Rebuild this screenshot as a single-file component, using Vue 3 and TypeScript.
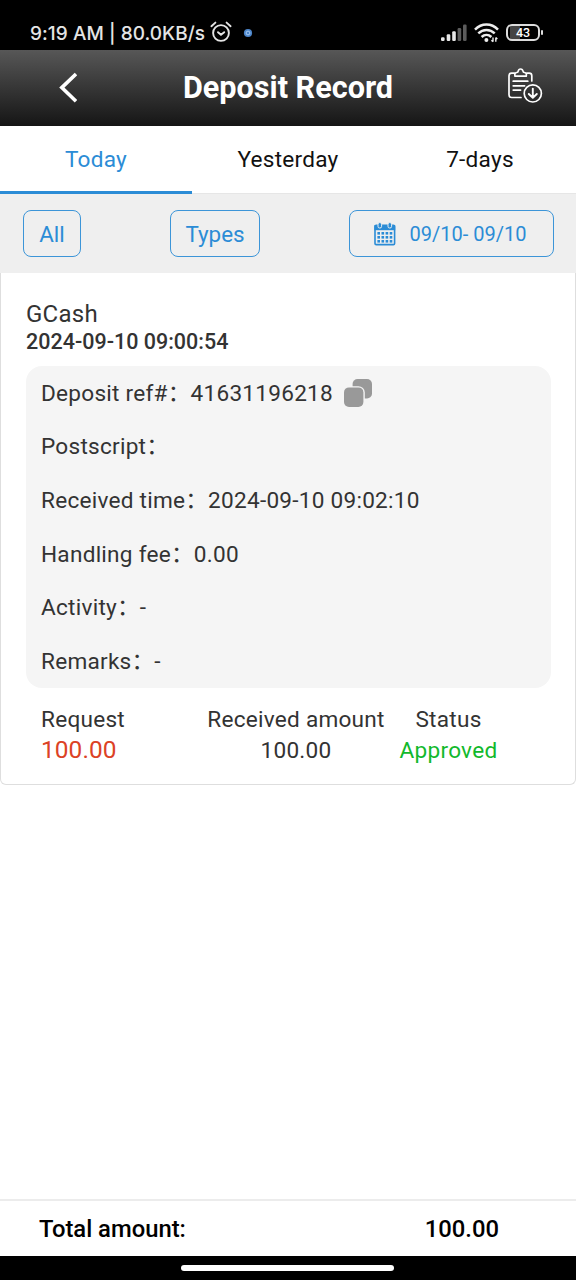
<script setup lang="ts">
import { ref } from 'vue'

interface Detail {
  label: string
  value: string
  copy?: boolean
}

const tabs: string[] = ['Today', 'Yesterday', '7-days']
const active = ref<number>(0)

const details: Detail[] = [
  { label: 'Deposit ref#', value: '41631196218', copy: true },
  { label: 'Postscript', value: '' },
  { label: 'Received time', value: '2024-09-10 09:02:10' },
  { label: 'Handling fee', value: '0.00' },
  { label: 'Activity', value: '-' },
  { label: 'Remarks', value: '-' },
]

const calendarRows: number[] = [0, 1, 2]
const calendarCols: number[] = [0, 1, 2, 3]
</script>

<template>
  <div class="screen">
    <div class="status">
      <span class="clock">9:19 AM | 80.0KB/s</span>
      <svg class="alarm" width="22" height="22" viewBox="0 0 22 22" fill="none" stroke="#e4e4e4" stroke-width="1.9" stroke-linecap="round">
        <circle cx="11" cy="12" r="7.9" />
        <path d="M1.4 5.2 5.4 1.6M20.6 5.2 16.6 1.6M8 11.2l3 2.6 3.2-2.6" />
      </svg>
      <svg class="dot" width="10" height="10" viewBox="0 0 10 10">
        <circle cx="5" cy="5" r="4.1" fill="#4d86cb" />
        <circle cx="5" cy="5" r="1.9" fill="none" stroke="#a9cdf2" stroke-width="1" />
      </svg>
      <span class="grow"></span>
      <svg class="signal" width="26" height="18" viewBox="0 0 26 18">
        <g fill="#e8e8e8">
          <rect x="0" y="13.2" width="3.6" height="3.8" rx="1.2" />
          <rect x="5.7" y="10.2" width="3.6" height="6.8" rx="1.2" />
          <rect x="11.2" y="7.2" width="3.6" height="9.8" rx="1.2" />
        </g>
        <g fill="#5c5c5c">
          <rect x="16.6" y="4" width="3.6" height="13" rx="1.2" />
          <rect x="22" y="0.6" width="3.6" height="16.4" rx="1.2" />
        </g>
      </svg>
      <svg class="wifi" width="25" height="20" viewBox="0 0 25 20" fill="none" stroke="#ececec" stroke-width="2.5">
        <path d="M1 6.6C7.6-.2 17.4-.2 24 6.6" />
        <path d="M4.3 10.4c4.7-4.6 11.7-4.6 16.4 0" />
        <path d="M7.6 14c2.9-2.7 6.9-2.7 9.8 0" />
        <circle cx="12.4" cy="17" r="2" fill="#ececec" stroke="none" />
        <path d="M19 14.4v4.4M17.4 17.2l1.6 1.4M21.8 18.8v-4.4M23.4 16l-1.6-1.4" stroke-width="1.4" />
      </svg>
      <div class="battery"><span>43</span></div>
    </div>

    <header class="header">
      <svg class="back" width="20" height="32" viewBox="0 0 20 32" fill="none" stroke="#fff" stroke-width="3.6">
        <path d="M19 2 4.8 15.6 19 29.2" />
      </svg>
      <h1>Deposit Record</h1>
      <svg class="report" width="36" height="36" viewBox="0 0 36 36" fill="none" stroke="#fff" stroke-width="1.7" stroke-linecap="round" stroke-linejoin="round">
        <path d="M7.5 5.2H4.6Q2 5.2 2 7.8v19Q2 29.5 4.6 29.5H14M19.8 5.2h2.4q2.6 0 2.6 2.6V13" />
        <path d="M8 8.2q-.9-3.3 1.8-3.7 1.2-.1 1.4-1.3Q11.6 1 13.6 1t2.4 2.2q.2 1.2 1.4 1.3 2.7.4 1.8 3.7Z" />
        <path d="M6.2 13.2h14.6M6.2 17.8h11.4M6.2 22.1h7.4" />
        <circle cx="25.8" cy="25.4" r="8.6" />
        <path d="M25.8 20.6v9M21.8 26l4 3.8 4-3.8" stroke-width="1.9" />
      </svg>
    </header>

    <nav class="tabs">
      <button
        v-for="(tab, i) in tabs"
        :key="tab"
        class="tab"
        :class="{ active: active === i }"
        @click="active = i"
      >{{ tab }}</button>
    </nav>

    <div class="filters">
      <button class="filter all">All</button>
      <button class="filter types">Types</button>
      <button class="filter range">
        <svg width="22" height="24" viewBox="0 0 22 24">
          <rect x="1" y="3.4" width="19.6" height="19.2" rx="1.2" fill="none" stroke="#2b8cd6" stroke-width="1.6" />
          <path d="M.4 3.2h20.8v5H.4Z" fill="#2b8cd6" />
          <g fill="#2b8cd6" stroke="#efefef" stroke-width="1">
            <rect x="4" y=".6" width="3.6" height="5.4" rx="1.6" />
            <rect x="14" y=".6" width="3.6" height="5.4" rx="1.6" />
          </g>
          <template v-for="r in calendarRows" :key="r">
            <rect
              v-for="c in calendarCols"
              :key="c"
              :x="3.4 + c * 4.1"
              :y="10 + r * 4"
              width="2.6"
              height="2.6"
              fill="#2b8cd6"
            />
          </template>
        </svg>
        <span>09/10- 09/10</span>
      </button>
    </div>

    <main class="card">
      <div class="method">GCash</div>
      <div class="created">2024-09-10 09:00:54</div>
      <div class="details">
        <div v-for="d in details" :key="d.label" class="row">
          <span class="text">{{ d.label }}：{{ d.value }}</span>
          <svg v-if="d.copy" class="copy" width="30" height="30" viewBox="0 0 30 30" fill="#999">
            <rect x="9.6" y="1" width="19.4" height="19.4" rx="5" />
            <rect x="-.2" y="8.2" width="22" height="22" rx="6.4" fill="#f5f5f5" />
            <rect x="1" y="9.4" width="19.4" height="19.6" rx="5" />
          </svg>
        </div>
      </div>
      <div class="summary">
        <div class="col request">
          <span>Request</span>
          <span class="red">100.00</span>
        </div>
        <div class="col received">
          <span>Received amount</span>
          <span>100.00</span>
        </div>
        <div class="col state">
          <span>Status</span>
          <span class="green">Approved</span>
        </div>
      </div>
    </main>

    <footer class="total">
      <span>Total amount:</span>
      <span class="sum">100.00</span>
    </footer>
    <div class="gesture"><span></span></div>
  </div>
</template>

<style>
body {
  margin: 0;
}
</style>

<style scoped>
.screen {
  width: 576px;
  height: 1280px;
  display: flex;
  flex-direction: column;
  overflow: hidden;
  background: #fff;
  font-family: Roboto, "Noto Sans CJK SC", sans-serif;
  font-size: 22.6px;
  letter-spacing: 0.25px;
  color: #333;
}

button {
  margin: 0;
  padding: 0;
  border: 0;
  background: none;
  font: inherit;
  letter-spacing: inherit;
}

svg {
  flex: none;
  display: block;
}

.status {
  box-sizing: border-box;
  height: 50px;
  padding: 16px 36px 0 30px;
  display: flex;
  align-items: center;
  background: #000;
  color: #e4e4e4;
}

.clock {
  font-family: Inter, "Noto Sans", sans-serif;
  font-size: 19px;
  font-weight: 500;
  letter-spacing: 0.05px;
  white-space: nowrap;
  width: 180px;
}

.alarm {
  margin-top: -3px;
}

.dot {
  margin-left: 11px;
}

.grow {
  flex: 1;
}

.signal {
  margin-top: -1px;
}

.wifi {
  margin: -1px 0 0 7px;
}

.battery {
  position: relative;
  box-sizing: border-box;
  width: 34px;
  height: 17px;
  margin: -2px 0 0 7px;
  border: 2px solid #dcdcdc;
  border-radius: 6px;
  background: linear-gradient(90deg, #000 2px, #444 2px, #444 12px, #000 12px);
  color: #fff;
  font-size: 12.5px;
  font-weight: 500;
  letter-spacing: 0;
  line-height: 14px;
  text-align: center;
}

.battery::after {
  content: "";
  position: absolute;
  right: -5px;
  top: 4px;
  width: 2px;
  height: 5px;
  border-radius: 1px;
  background: #dcdcdc;
}

.header {
  box-sizing: border-box;
  height: 76px;
  padding: 0 33px 0 57px;
  display: grid;
  grid-template-columns: 36px 1fr 36px;
  align-items: center;
  background: linear-gradient(#575757, #151515);
  color: #fff;
}

.header h1 {
  margin: 0 24px 2px 0;
  font-size: 30.6px;
  font-weight: 700;
  letter-spacing: 0;
  text-align: center;
}

.report {
  margin-top: -5px;
}

.tabs {
  box-sizing: border-box;
  height: 68px;
  display: grid;
  grid-template-columns: repeat(3, 1fr);
  border-bottom: 1px solid #e6e6e6;
}

.tab {
  height: 68px;
  box-sizing: border-box;
  padding-top: 2px;
  border-bottom: 3px solid transparent;
  color: #111;
}

.tab.active {
  border-bottom-color: #2b8cd6;
  color: #2b8cd6;
}

.filters {
  box-sizing: border-box;
  height: 79px;
  padding: 16px 22px 0 23px;
  display: flex;
  align-items: flex-start;
  justify-content: space-between;
  background: #efefef;
}

.filter {
  box-sizing: border-box;
  height: 47px;
  border: 1px solid #3c95d8;
  border-radius: 8px;
  color: #2b8cd6;
  font-size: 22.4px;
  letter-spacing: 0;
}

.all {
  width: 58px;
}

.types {
  width: 90px;
}

.range {
  width: 205px;
  padding-right: 3px;
  display: flex;
  align-items: center;
  justify-content: center;
  gap: 14px;
  font-size: 20px;
}

.card {
  box-sizing: border-box;
  height: 512px;
  padding: 27px 24px 0 25px;
  border: 1px solid #dedede;
  border-top: 0;
  border-radius: 0 0 6px 6px;
}

.method {
  font-size: 24px;
  line-height: 28px;
}

.created {
  line-height: 28px;
  font-weight: 500;
  font-size: 21.5px;
  letter-spacing: 0;
}

.details {
  box-sizing: border-box;
  height: 322px;
  margin-top: 10px;
  padding-left: 15px;
  display: grid;
  grid-template-rows: repeat(6, 1fr);
  border-radius: 16px;
  background: #f5f5f5;
}

.row {
  display: flex;
  align-items: center;
  white-space: pre;
  line-height: 30px;
}

.text {
  padding-top: 1.4px;
}

.copy {
  margin-left: 10px;
}

.summary {
  display: flex;
  padding: 16px 0 0 15px;
}

.col {
  display: flex;
  flex-direction: column;
  align-items: center;
  line-height: 31px;
  white-space: nowrap;
}

.request {
  width: 166px;
  align-items: flex-start;
}

.received {
  width: 178px;
}

.state {
  width: 127px;
}

.red {
  color: #dc4225;
  font-size: 24.4px;
  letter-spacing: 0.1px;
  line-height: 29px;
}

.green {
  color: #12b92c;
}

.total {
  box-sizing: border-box;
  height: 57px;
  margin-top: auto;
  padding: 0 77px 0 39px;
  display: flex;
  align-items: center;
  justify-content: space-between;
  border-top: 2px solid #ececec;
  color: #000;
  font-weight: 500;
  font-size: 23.8px;
  letter-spacing: 0;
}

.gesture {
  height: 24px;
  padding-right: 1px;
  display: flex;
  align-items: center;
  justify-content: center;
  background: #000;
}

.gesture span {
  width: 213px;
  height: 6px;
  border-radius: 3px;
  background: #fff;
}
</style>
